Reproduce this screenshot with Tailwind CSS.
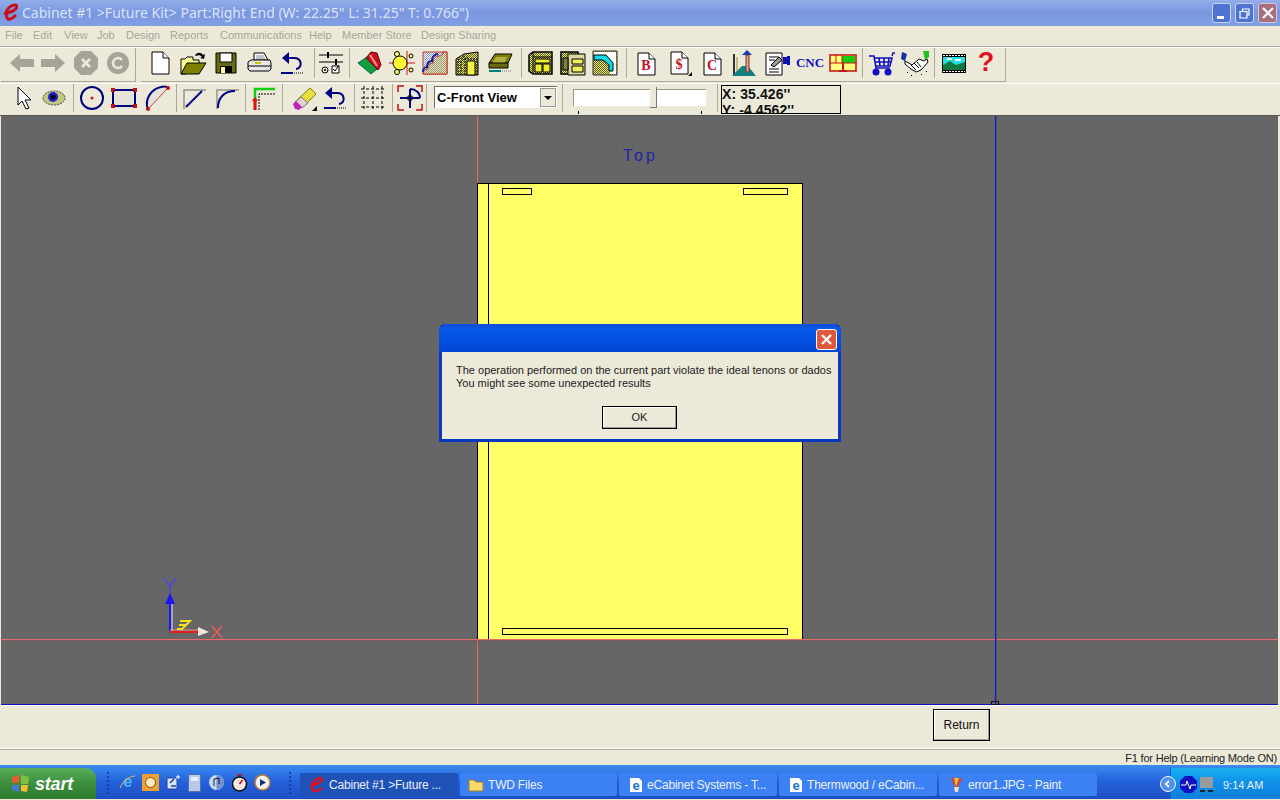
<!DOCTYPE html>
<html lang="en">
<head>
<meta charset="UTF-8">
<title>Cabinet #1 >Future Kit> Part:Right End</title>
<script src="https://cdn.jsdelivr.net/npm/@tailwindcss/browser@4"></script>
</head>
<body class="w-[1280px] h-[800px] overflow-hidden bg-[#ECE9D8] flex flex-col font-['Liberation_Sans','DejaVu_Sans',sans-serif]">

<!-- shared hatch fills for the toolbar icons -->
<svg class="absolute w-0 h-0">
  <defs>
    <pattern id="checkY" width="2" height="2" patternUnits="userSpaceOnUse"><path d="M0 0h2v2H0z" fill="#F0F040"/><path d="M0 0h1v1H0zM1 1h1v1H1z" fill="#555"/></pattern>
    <pattern id="checkG" width="2" height="2" patternUnits="userSpaceOnUse"><path d="M0 0h2v2H0z" fill="#E8E4B0"/><path d="M0 0h1v1H0zM1 1h1v1H1z" fill="#998"/></pattern>
    <pattern id="hatchB" width="2" height="2" patternUnits="userSpaceOnUse"><path d="M0 0h2v2H0z" fill="#fff"/><path d="M0 0h1v1H0zM1 1h1v1H1z" fill="#8890C0"/></pattern>
  </defs>
</svg>

<!-- title bar -->
<div class="h-[26px] shrink-0 flex items-center bg-gradient-to-b from-[#94AEEA] via-[#7A96DF] to-[#82A0E6]">
  <svg class="ml-[2px] w-[16px] h-[20px]" viewBox="0 0 16 20"><path d="M3 12C4 6 9 2 13 2c3 0 2 4-2 6L5 10M5 10c-1 4 0 7 3 6 2 0 4-2 6-4" fill="none" stroke="#C8101C" stroke-width="3"/></svg>
  <span class="ml-[4px] text-[14px] leading-none text-[#D9E4F9] whitespace-nowrap font-['Noto_Sans',sans-serif]">Cabinet #1 &gt;Future Kit&gt; Part:Right End (W: 22.25" L: 31.25" T: 0.766")</span>
  <div class="ml-auto mr-[3px] flex gap-[4px]">
    <div class="w-[19px] h-[20px] rounded-[3px] border border-[#C6D4F2] bg-[#4F73D3] flex items-end pl-[4px] pb-[3px]"><div class="w-[7px] h-[3px] bg-white"></div></div>
    <div class="w-[19px] h-[20px] rounded-[3px] border border-[#C6D4F2] bg-[#4F73D3] flex items-center justify-center">
      <svg class="w-[11px] h-[11px]" viewBox="0 0 11 11"><path d="M3.500 3V1h6.500v6H8M1 3.500h7v6.500H1z" fill="none" stroke="#fff" stroke-width="1.200"/></svg>
    </div>
    <div class="w-[19px] h-[20px] rounded-[3px] border border-[#D8C8D8] bg-[#A8707F] flex items-center justify-center">
      <svg class="w-[12px] h-[12px]" viewBox="0 0 12 12"><path d="M1 1l10 10M11 1L1 11" stroke="#fff" stroke-width="2.200"/></svg>
    </div>
  </div>
</div>

<!-- menu -->
<div class="h-[20px] shrink-0 flex items-center pb-[2px] text-[11px] text-[#A8A596] whitespace-nowrap">
  <span class="ml-[5px] w-[28px]">File</span><span class="w-[31px]">Edit</span><span class="w-[33px]">View</span><span class="w-[29px]">Job</span><span class="w-[44px]">Design</span><span class="w-[50px]">Reports</span><span class="w-[89px]">Communications</span><span class="w-[33px]">Help</span><span class="w-[79px]">Member Store</span><span>Design Sharing</span>
</div>
<div class="h-px shrink-0 bg-[#ACA899]"></div>
<div class="h-px shrink-0 bg-white"></div>

<!-- toolbar 1 -->
<div class="h-[35px] shrink-0 flex">
  <div class="ml-[1px] w-[135px] h-[34px] pb-[4px] border-r border-b border-[#ACA899] flex items-center">
    <svg class="ml-[7px] w-[28px] h-[28px]" viewBox="0 0 28 28"><path d="M2 14l10-9v5h14v8H12v5z" fill="#A6A398"/></svg>
    <svg class="ml-[3px] w-[28px] h-[28px]" viewBox="0 0 28 28"><path d="M26 14l-10-9v5H2v8h14v5z" fill="#A6A398"/></svg>
    <svg class="ml-[5px] w-[28px] h-[28px]" viewBox="0 0 28 28"><path d="M9 2h10l7 7v10l-7 7H9l-7-7V9z" fill="#A6A398"/><path d="M10 10l8 8M18 10l-8 8" stroke="#ECE9D8" stroke-width="2.500"/></svg>
    <svg class="ml-[4px] w-[28px] h-[28px]" viewBox="0 0 28 28"><circle cx="14" cy="14" r="11" fill="#A6A398"/><path d="M18 17a5 5 0 1 1 0-6" fill="none" stroke="#ECE9D8" stroke-width="2.500"/><path d="M17 12h8l-2 6z" fill="#A6A398"/></svg>
  </div>
  <div class="ml-[5px] w-[865px] h-[34px] pb-[4px] border-r border-b border-[#ACA899] flex items-center">
    <svg class="ml-[5px] w-[28px] h-[28px]" viewBox="0 0 28 28"><path d="M6 3h11l6 6v16H6z" fill="#fff" stroke="#000"/><path d="M17 3v6h6" fill="#fff" stroke="#000"/></svg>
    <svg class="ml-[5px] w-[28px] h-[28px]" viewBox="0 0 28 28"><path d="M2 10h4l2-2h6v3h6v5L6 25H2z" fill="#FFFF99" stroke="#000"/><path d="M2 25l6-11h19l-7 11z" fill="#808000" stroke="#000"/><path d="M16 6c3-3 6-3 8 0l2-1-1 5-4-1 2-1c-2-2-4-2-6-1" fill="#000"/></svg>
    <svg class="ml-[5px] w-[28px] h-[28px]" viewBox="0 0 28 28"><path d="M4 4h20v20H4z" fill="#6B6B10" stroke="#000"/><path d="M8 4h12v9H8z" fill="#fff" stroke="#000"/><path d="M8 17h12v7H8z" fill="#000"/><path d="M9 18h4v6H9z" fill="#FFFF99"/></svg>
    <svg class="ml-[5px] w-[28px] h-[28px]" viewBox="0 0 28 28"><path d="M9 4h10l4 7H9z" fill="#fff" stroke="#000"/><path d="M11 7h8M11 9h9" stroke="#888"/><path d="M3 13l3-2h19l1 3v6l-2 2H5l-2-2z" fill="#E8E8E8" stroke="#000"/><path d="M3 17h23" stroke="#000"/><path d="M10 14h6" stroke="#C8C800" stroke-width="2"/></svg>
    <svg class="ml-[5px] w-[28px] h-[28px]" viewBox="0 0 28 28"><path d="M6 9h10c8 0 9 10 2 11" fill="none" stroke="#000080" stroke-width="2"/><path d="M11 3L4 9l7 6z" fill="#000080"/><path d="M3 24h12" stroke="#000080" stroke-width="2"/><path d="M16 24h10" stroke="#000" stroke-dasharray="1 1"/></svg>
    <div class="ml-[8px] w-px h-[30px] bg-[#ACA899]"></div>
    <svg class="ml-[2px] w-[28px] h-[28px]" viewBox="0 0 28 28"><path d="M2 6h24M2 13h24" stroke="#000"/><path d="M11 3v6M19 10v6" stroke="#000" stroke-width="2"/><circle cx="8" cy="21" r="3" fill="none" stroke="#000"/><circle cx="8" cy="21" r="1"/><path d="M15 17h7v7h-7z" fill="#fff" stroke="#000"/><path d="M16 20l2 2 4-6" fill="none" stroke="#000"/></svg>
    <div class="ml-[4px] w-px h-[30px] bg-[#ACA899]"></div>
    <svg class="ml-[5px] w-[28px] h-[28px]" viewBox="0 0 28 28"><path d="M3 14l9-6 10 12-6 5z" fill="#0F9F3F" stroke="#064"/><path d="M11 9l5-6 6 1 4 12-3 5z" fill="#C8101C" stroke="#600"/><path d="M15 6l7 11" stroke="#FF9999" stroke-width="2"/></svg>
    <svg class="ml-[5px] w-[28px] h-[28px]" viewBox="0 0 28 28"><path d="M1 14h26M19 2v24" stroke="#E01010"/><circle cx="12" cy="14" r="7" fill="#FFFF33" stroke="#000"/><circle cx="9" cy="5" r="2.500" fill="#FFFF66" stroke="#000"/><circle cx="9" cy="23" r="2.500" fill="#FFFF66" stroke="#000"/><circle cx="23" cy="7" r="2" fill="#FFFF66" stroke="#000"/><circle cx="23" cy="21" r="2" fill="#FFFF66" stroke="#000"/></svg>
    <svg class="ml-[5px] w-[28px] h-[28px]" viewBox="0 0 28 28"><path d="M2 3h24v22H2z" fill="url(#hatchB)" stroke="#B04030"/><path d="M2 25c0-3 2-5 5-5 0-4 2-6 5-6 0-5 3-7 6-7 2 0 4-1 4-4h4v22z" fill="url(#checkG)" stroke="#C83018"/><path d="M2 23c0-3 2-5 4-5 0-4 2-6 5-6 0-5 3-7 6-7" fill="none" stroke="#1020A0" stroke-width="2"/></svg>
    <svg class="ml-[4px] w-[28px] h-[28px]" viewBox="0 0 28 28"><path d="M3 26V10l8-5 14-2v23z" fill="url(#checkY)" stroke="#000"/><path d="M5 26V11l7-4M8 26V12l7-4M12 26V10h12v16" fill="none" stroke="#000" stroke-dasharray="2 1"/><path d="M14 12h8v14h-8z" fill="#F2F040" stroke="#000"/></svg>
    <svg class="ml-[5px] w-[28px] h-[28px]" viewBox="0 0 28 28"><path d="M3 14l6-9h17l-4 9z" fill="#808000" stroke="#000"/><path d="M6 15l4-7h11l-3 7z" fill="#B0B040"/><path d="M3 14h19v5H3z" fill="#6A6A10" stroke="#000"/><path d="M3 22h12" stroke="#008080" stroke-width="2"/><path d="M16 22h9" stroke="#777" stroke-dasharray="1 1"/></svg>
    <div class="ml-[7px] w-px h-[30px] bg-[#ACA899]"></div>
    <svg class="ml-[4px] w-[28px] h-[28px]" viewBox="0 0 28 28"><path d="M3 6l4-3h19v22H7l-4-3z" fill="url(#checkY)" stroke="#000" stroke-width="1.500"/><path d="M7 3v22M7 8h19" stroke="#000"/><path d="M9 10h15v4H9z" fill="#EEEE30" stroke="#000"/><path d="M9 15h7v8H9zM17 15h7v8h-7z" fill="#EEEE30" stroke="#000"/></svg>
    <svg class="ml-[5px] w-[28px] h-[28px]" viewBox="0 0 28 28"><path d="M2 3h17v22H2z" fill="url(#checkY)" stroke="#000" stroke-width="1.500"/><path d="M9 5h17v21H9z" fill="#D8D8A0" stroke="#000"/><path d="M4 9h5v12H4z" fill="#808040" stroke="#000"/><path d="M13 10h11v5H13zM13 17h11v6H13z" fill="#EEEE60" stroke="#000"/></svg>
    <svg class="ml-[4px] w-[28px] h-[28px]" viewBox="0 0 28 28"><path d="M2 2h24v24H2z" fill="url(#checkY)" stroke="#333"/><path d="M3 3h22v5H3z" fill="#fff"/><path d="M3 8h9l7 6v11h6V3H3z" fill="#fff"/><path d="M3 6h12l7 8v8h-4v-6l-6-5H3z" fill="#10D8E8" stroke="#000"/></svg>
    <div class="ml-[7px] w-px h-[30px] bg-[#ACA899]"></div>
    <svg class="ml-[5px] w-[28px] h-[28px]" viewBox="0 0 28 28"><path d="M6 4h11l6 6v16H6z" fill="#fff" stroke="#000"/><path d="M17 4v6h6" fill="#fff" stroke="#000"/><text x="14" y="21" text-anchor="middle" font-family="Liberation Serif,serif" font-size="14" font-weight="700" fill="#C8101C">B</text></svg>
    <svg class="ml-[5px] w-[28px] h-[28px]" viewBox="0 0 28 28"><path d="M6 3h11l6 6v16H6z" fill="#fff" stroke="#000"/><path d="M17 3v6h6" fill="#fff" stroke="#000"/><text x="14" y="20" text-anchor="middle" font-family="Liberation Serif,serif" font-size="14" font-weight="700" fill="#C8101C">$</text><path d="M27 23v4h-4z"/></svg>
    <svg class="ml-[5px] w-[28px] h-[28px]" viewBox="0 0 28 28"><path d="M6 4h11l6 6v16H6z" fill="#fff" stroke="#000"/><path d="M17 4v6h6" fill="#fff" stroke="#000"/><text x="14" y="21" text-anchor="middle" font-family="Liberation Serif,serif" font-size="14" font-weight="700" fill="#C8101C">C</text></svg>
    <svg class="ml-[4px] w-[28px] h-[28px]" viewBox="0 0 28 28"><path d="M4 5v21h20" fill="none" stroke="#333" stroke-width="2"/><path d="M7 8v15h14" fill="none" stroke="#C8B880" stroke-width="2"/><path d="M2 27l10-10 6 0 8 10z" fill="#108080"/><path d="M12 6h10L17 1z" fill="#1040B0"/><path d="M16 6h3v17h-3z" fill="#E0A090" stroke="#803020"/></svg>
    <svg class="ml-[5px] w-[28px] h-[28px]" viewBox="0 0 28 28"><path d="M3 4h16v22H3z" fill="#fff" stroke="#000"/><path d="M6 8h10M6 11h6M6 20h10M6 23h10" stroke="#000"/><path d="M8 16l8-8 3 3-8 7z" fill="#999" stroke="#000"/><path d="M20 8h4v7h-4z" fill="#1010B0"/><path d="M24 7h3v9h-3z" fill="#1010B0"/></svg>
    <span class="ml-[5px] w-[28px] text-center text-[13px] leading-none font-bold text-[#1010C0] font-['Liberation_Serif',serif] whitespace-nowrap flex justify-center">CNC</span>
    <svg class="ml-[5px] w-[28px] h-[28px]" viewBox="0 0 28 28"><path d="M1 6h26v16H1z" fill="#FFFF80" stroke="#C81010" stroke-width="1.500"/><path d="M13 7h13v7H13z" fill="#10D010"/><path d="M1 14h26M7 6v8M13 6v8" stroke="#C81010"/><path d="M14 14v8M10 22h8" stroke="#C81010" stroke-width="2"/></svg>
    <div class="ml-[5px] w-px h-[30px] bg-[#ACA899]"></div>
    <svg class="ml-[4px] w-[28px] h-[28px]" viewBox="0 0 28 28"><path d="M2 7h5l2 12h14M7 9h18l-2 8H9M8 13h16M12 9l1 8M17 9v8M22 9l-1 8" fill="none" stroke="#1010C0" stroke-width="1.600"/><path d="M25 7l1-3h2" fill="none" stroke="#1010C0" stroke-width="1.500"/><circle cx="9" cy="23" r="3.500" fill="#1010C0"/><circle cx="21" cy="23" r="3.500" fill="#1010C0"/></svg>
    <svg class="ml-[6px] w-[28px] h-[28px]" viewBox="0 0 28 28"><path d="M1 3l5 2-2 7-4-2z" fill="#1030A0"/><path d="M22 2h6v6l-4 3z" fill="#20C020"/><path d="M4 12l7 4 7-6 5 2 3-2 1 3-7 8-5 2-5-3-6-5z" fill="#fff" stroke="#000"/><path d="M10 16l5 5M13 14l5 5M16 13l4 5" stroke="#000"/><path d="M6 23l1 1M10 26l1 1M20 25l1 1M25 22l1 1" stroke="#000"/></svg>
    <div class="ml-[5px] w-px h-[30px] bg-[#ACA899]"></div>
    <svg class="ml-[5px] w-[28px] h-[28px]" viewBox="0 0 28 28"><path d="M2 5h24v19H2z" fill="#000"/><path d="M3 8h22v13H3z" fill="#20E0E0"/><path d="M3 16l7-4 6 4 9-3v8H3z" fill="#107840"/><path d="M7 10h5M15 11h6" stroke="#fff" stroke-width="2"/><path d="M3 6.500h22M3 22.500h22" stroke="#fff" stroke-dasharray="2 1"/></svg>
    <span class="ml-[4px] w-[28px] text-center text-[27px] leading-none font-bold text-[#E01020]">?</span>
  </div>
</div>

<!-- toolbar 2 -->
<div class="h-[32px] shrink-0 flex items-center pb-[3px] border-t border-white">
  <svg class="ml-[9px] w-[28px] h-[28px]" viewBox="0 0 28 28"><path d="M9 3v18l4-4 4 8 3-1-4-8h6z" fill="#fff" stroke="#000"/></svg>
  <svg class="ml-[3px] w-[28px] h-[28px]" viewBox="0 0 28 28"><ellipse cx="14" cy="14" rx="11" ry="7" fill="#C0C880" stroke="#444" stroke-dasharray="2 1"/><circle cx="13" cy="13" r="5" fill="#2020D0"/><circle cx="13" cy="13" r="2.500" fill="#000"/></svg>
  <div class="ml-[5px] w-px h-[28px] bg-[#ACA899]"></div>
  <svg class="ml-[4px] w-[28px] h-[28px]" viewBox="0 0 28 28"><circle cx="14" cy="14" r="11" fill="none" stroke="#000080" stroke-width="2"/><circle cx="14" cy="14" r="1.500" fill="#E01010"/></svg>
  <svg class="ml-[4px] w-[28px] h-[28px]" viewBox="0 0 28 28"><path d="M3 6h22v16H3z" fill="#E4E4D8" stroke="#000080" stroke-width="2"/><path d="M1 4h4v4H1zM23 4h4v4h-4zM1 20h4v4H1zM23 20h4v4h-4z" fill="#C01010"/></svg>
  <svg class="ml-[5px] w-[28px] h-[28px]" viewBox="0 0 28 28"><path d="M5 25C1 16 8 5 18 3c4-1 6 0 7 1z" fill="#E4E4D8"/><path d="M5 25C1 16 8 5 18 3c4-1 6 0 7 1" fill="none" stroke="#000080" stroke-width="2"/><path d="M5 25L25 4" stroke="#C04040"/><circle cx="5" cy="25" r="2" fill="#C01010"/><circle cx="25" cy="4" r="2" fill="#C01010"/></svg>
  <div class="ml-[5px] w-px h-[28px] bg-[#ACA899]"></div>
  <svg class="ml-[4px] w-[28px] h-[28px]" viewBox="0 0 28 28"><path d="M3 25V6h22" fill="none" stroke="#A8A8A0" stroke-width="2"/><path d="M5 23L21 7" stroke="#000080" stroke-width="2"/></svg>
  <svg class="ml-[5px] w-[28px] h-[28px]" viewBox="0 0 28 28"><path d="M3 25V6h22" fill="none" stroke="#A8A8A0" stroke-width="2"/><path d="M4 24c0-10 6-17 17-17" fill="none" stroke="#000080" stroke-width="2"/></svg>
  <div class="ml-[3px] w-px h-[28px] bg-[#ACA899]"></div>
  <svg class="ml-[4px] w-[28px] h-[28px]" viewBox="0 0 28 28"><path d="M5 26V5h20" fill="none" stroke="#10D010" stroke-width="2.500"/><path d="M9 26V10h16" fill="none" stroke="#000" stroke-dasharray="2 1"/><path d="M5 26v-11" stroke="#E01010" stroke-width="3"/><path d="M2 17l3-4 3 4z" fill="#E01010"/></svg>
  <div class="ml-[4px] w-px h-[28px] bg-[#ACA899]"></div>
  <svg class="ml-[7px] w-[28px] h-[28px]" viewBox="0 0 28 28"><path d="M5 18L20 4l6 6-14 14z" fill="#E8E040" stroke="#808000"/><path d="M5 18l6-5 7 6-6 5z" fill="#E0D0D0" stroke="#777"/><path d="M3 20l3-3 6 6-3 3-4-1z" fill="#C020C0"/><path d="M27 22v5h-5z"/></svg>
  <svg class="ml-[3px] w-[28px] h-[28px]" viewBox="0 0 28 28"><path d="M6 9h10c8 0 9 10 2 11" fill="none" stroke="#000080" stroke-width="2"/><path d="M11 3L4 9l7 6z" fill="#000080"/><path d="M3 24h12" stroke="#000080" stroke-width="2"/><path d="M16 24h10" stroke="#000" stroke-dasharray="1 1"/></svg>
  <div class="ml-[5px] w-px h-[28px] bg-[#ACA899]"></div>
  <svg class="ml-[4px] w-[28px] h-[28px]" viewBox="0 0 28 28"><path d="M2 5h24M2 14h24M2 23h24M5 2v24M14 2v24M23 2v24" stroke="#000" stroke-dasharray="3 2"/></svg>
  <div class="ml-[5px] w-px h-[28px] bg-[#ACA899]"></div>
  <svg class="ml-[3px] w-[28px] h-[28px]" viewBox="0 0 28 28"><path d="M2 8V2h6M20 2h6v6M2 20v6h6M26 20v6h-6" fill="none" stroke="#C01010" stroke-width="1.500"/><path d="M4 14h20M14 5v19M14 5c6 0 10 4 10 9" fill="none" stroke="#000080" stroke-width="2"/><path d="M12 12h4v4h-4z" fill="none" stroke="#000"/></svg>
  <div class="ml-[2px] w-px h-[28px] bg-[#ACA899]"></div>
  <!-- view dropdown -->
  <div class="ml-[7px] mt-[-2px] w-[123px] h-[22px] bg-white border-t border-l border-[#716F64] flex items-center justify-between">
    <span class="ml-[2px] text-[13px] font-bold leading-none text-black whitespace-nowrap">C-Front View</span>
    <div class="mr-[1px] w-[16px] h-[19px] bg-[#ECE9D8] border border-[#999] flex items-center justify-center"><div class="border-x-[4px] border-t-[4px] border-x-transparent border-t-black"></div></div>
  </div>
  <div class="ml-[5px] w-px h-[28px] bg-[#ACA899]"></div>
  <!-- slider -->
  <div class="relative ml-[10px] mt-[-2px] w-[133px] h-[27px]">
    <div class="mt-[5px] h-[17px] bg-white border-t border-l border-[#9A9788]"></div>
    <div class="absolute left-[77px] top-[3px] w-[7px] h-[21px] bg-[#ECE9D8] border-r border-b border-[#777]"></div>
    <div class="absolute left-[5px] bottom-[-3px] w-px h-[3px] bg-black"></div>
    <div class="absolute left-[128px] bottom-[-3px] w-px h-[3px] bg-black"></div>
  </div>
  <div class="ml-[11px] w-px h-[28px] bg-[#ACA899]"></div>
  <!-- coordinates -->
  <div class="ml-[3px] mt-[2px] w-[120px] h-[29px] border border-black overflow-hidden text-[14px] leading-[16px] font-bold tracking-[0.1px] text-[#111] whitespace-nowrap">
    <div>X: 35.426''</div><div>Y: -4.4562''</div>
  </div>
</div>
<div class="h-px shrink-0 bg-[#555]"></div>

<!-- drawing area -->
<div class="relative h-[589px] ml-px mr-[2px] shrink-0 bg-[#666666] overflow-hidden">
  <div class="absolute left-[476px] top-0 bottom-0 w-px bg-[#E86A6A] shadow-[-1px_0_0_#7C5C5C]"></div>
  <div class="absolute left-0 right-0 top-[523px] h-px bg-[#E86A6A] shadow-[0_1px_0_#7C5C5C]"></div>
  <div class="absolute left-[994px] top-0 bottom-0 w-px bg-[#1414D8] shadow-[1px_0_0_#50507E]"></div>
  <div class="absolute left-0 right-0 bottom-0 h-px bg-[#1010C0]"></div>
  <div class="absolute left-[990px] bottom-0 w-[8px] h-[4px] border border-[#111]"></div>

  <span class="absolute left-[622px] top-[29px] text-[16px] leading-[22px] tracking-[3px] text-[#2222A8]">Top</span>

  <div class="absolute left-[476px] top-[67px] w-[326px] h-[456px] bg-[#FFFF66] border-t border-r border-l border-black">
    <div class="absolute left-[10px] top-0 bottom-0 w-px bg-black"></div>
    <div class="absolute left-[24px] top-[4px] w-[30px] h-[7px] border border-black"></div>
    <div class="absolute left-[265px] top-[4px] w-[45px] h-[7px] border border-black"></div>
    <div class="absolute left-[24px] top-[444px] w-[286px] h-[7px] border border-black"></div>
  </div>

  <!-- axis marker -->
  <svg class="absolute left-[155px] top-[460px] w-[80px] h-[65px]" viewBox="0 0 80 65">
    <path d="M14 18V55" stroke="#1818F0" stroke-width="2"/><path d="M16 26V55" stroke="#E0E0FF"/>
    <path d="M9 28l5-11 5 11z" fill="#1818F0"/>
    <path d="M14 56H42" stroke="#E02020" stroke-width="2"/><path d="M14 54h30" stroke="#F09090"/>
    <path d="M42 51l11 5-11 4z" fill="#F8E8E0"/>
    <path d="M8 2l6 8 6-8M14 10v7" fill="none" stroke="#4848E8" stroke-width="1.500"/>
    <path d="M56 50l10 12M66 50L56 62" stroke="#EE5A5A" stroke-width="1.500"/>
    <path d="M24 45h10l-8 8h-5M23 49h7" fill="none" stroke="#F0E020" stroke-width="2"/>
  </svg>
</div>

<!-- bottom panel -->
<div class="h-px shrink-0 bg-white"></div>
<div class="h-[43px] shrink-0 flex items-center border-b border-white">
  <div class="ml-[933px] mt-[-5px] w-[57px] h-[32px] border border-black bg-[#ECE9D8] shadow-[inset_-1px_-1px_0_#999,inset_1px_1px_0_#fff] flex items-center justify-center text-[12px] leading-none text-[#111]">Return</div>
</div>

<!-- status bar -->
<div class="h-[16px] shrink-0 border-t border-[#ACA899] flex items-center justify-end pt-[1px] pr-[3px] text-[11px] tracking-[-0.2px] leading-none text-[#222] whitespace-nowrap">F1 for Help (Learning Mode ON)</div>

<!-- taskbar -->
<div class="relative h-[34px] shrink-0 bg-gradient-to-b from-[#3C8CF0] via-[#2460DC] to-[#1D4FC0] flex items-end text-[12px] tracking-[-0.2px] leading-none text-[#EAF0FF] whitespace-nowrap">
  <div class="w-[96px] h-[31px] rounded-tr-[10px] bg-gradient-to-b from-[#5AAE5A] via-[#3C8E3C] to-[#2F7A2F] flex items-center">
    <svg class="ml-[11px] w-[19px] h-[19px]" viewBox="0 0 19 19"><path d="M1 3l7-2v8H1z" fill="#E85A30"/><path d="M10 1l8 2-1 7h-7z" fill="#7EC040"/><path d="M1 11h7v7l-7-2z" fill="#4878D8"/><path d="M10 11h7l-1 7-6-1z" fill="#F0C030"/></svg>
    <span class="ml-[5px] text-[18px] leading-none font-bold italic text-white">start</span>
  </div>
  <div class="h-[27px] mb-[3px] flex items-center">
    <div class="ml-[11px] h-[22px] border-l-2 border-dotted border-[#143FA0]"></div>
    <svg class="ml-[10px] w-[17px] h-[17px]" viewBox="0 0 17 17"><text x="8.500" y="13" text-anchor="middle" font-family="Liberation Sans,sans-serif" font-size="16" font-weight="700" fill="#4FB8F0">e</text><path d="M1 14C5 5 12 2 16 2" fill="none" stroke="#E8C040"/></svg>
    <div class="ml-[6px] w-[17px] h-[17px] bg-[#F0A030] flex items-center justify-center"><div class="w-[11px] h-[11px] rounded-full bg-[#FBE8C0] border border-[#805010]"></div></div>
    <svg class="ml-[6px] w-[16px] h-[17px]" viewBox="0 0 16 17"><path d="M2 4h10v11H2z" fill="#D8E8FF" stroke="#2040A0"/><path d="M5 9l4-4M6 12h5" stroke="#1840A0" stroke-width="1.500"/><path d="M13 1v4M11 3h4" stroke="#fff"/></svg>
    <div class="ml-[7px] w-[13px] h-[18px] bg-[#B8C8E8] border border-[#5070B0]"><div class="m-[2px] h-[4px] bg-[#E8F0FF]"></div></div>
    <svg class="ml-[7px] w-[17px] h-[17px]" viewBox="0 0 17 17"><circle cx="8.500" cy="8.500" r="7.500" fill="#C8D8F0"/><path d="M8.500 1a7.500 7.500 0 0 1 0 15z" fill="#7090D0"/><path d="M6 12V5l5-1v6" fill="none" stroke="#123" /></svg>
    <svg class="ml-[6px] w-[17px] h-[18px]" viewBox="0 0 17 18"><circle cx="8.500" cy="10" r="7" fill="#FBE8E0" stroke="#111" stroke-width="1.500"/><path d="M8.500 10l3-4M6 1h5" stroke="#B01010" stroke-width="1.500"/></svg>
    <svg class="ml-[6px] w-[17px] h-[17px]" viewBox="0 0 17 17"><circle cx="8.500" cy="8.500" r="7.500" fill="#F4F4F4" stroke="#C08030" stroke-width="1.500"/><path d="M6 5l6 3.500L6 12z" fill="#12307A"/></svg>
    <div class="ml-[18px] h-[22px] border-l-2 border-dotted border-[#143FA0]"></div>
  </div>
  <div class="ml-[9px] mb-[3px] flex gap-[2px]">
    <div class="w-[158px] h-[23px] rounded-[2px] bg-[#1E52B7] flex items-center">
      <svg class="ml-[9px] w-[14px] h-[16px]" viewBox="0 0 14 16"><path d="M2 10C3 5 8 1 11 1c3 0 2 3-1 5L4 8M4 8c-1 4 0 7 3 6 2 0 4-2 6-3" fill="none" stroke="#E01020" stroke-width="2.500"/></svg>
      <span class="ml-[6px]">Cabinet #1 &gt;Future ...</span>
    </div>
    <div class="w-[157px] h-[23px] rounded-[2px] bg-[#3C81F3] flex items-center">
      <svg class="ml-[8px] w-[16px] h-[14px]" viewBox="0 0 16 14"><path d="M1 2h5l2 2h7v9H1z" fill="#F8D868" stroke="#A08020"/></svg>
      <span class="ml-[4px]">TWD Files</span>
    </div>
    <div class="w-[158px] h-[23px] rounded-[2px] bg-[#3C81F3] flex items-center">
      <svg class="ml-[9px] w-[16px] h-[16px]" viewBox="0 0 16 16"><path d="M2 1h9l3 3v11H2z" fill="#fff"/><text x="8" y="13" text-anchor="middle" font-family="Liberation Sans,sans-serif" font-size="13" font-weight="700" fill="#2070D0">e</text></svg>
      <span class="ml-[3px]">eCabinet Systems - T...</span>
    </div>
    <div class="w-[158px] h-[23px] rounded-[2px] bg-[#3C81F3] flex items-center">
      <svg class="ml-[9px] w-[16px] h-[16px]" viewBox="0 0 16 16"><path d="M2 1h9l3 3v11H2z" fill="#fff"/><text x="8" y="13" text-anchor="middle" font-family="Liberation Sans,sans-serif" font-size="13" font-weight="700" fill="#2070D0">e</text></svg>
      <span class="ml-[3px]">Thermwood / eCabin...</span>
    </div>
    <div class="w-[158px] h-[23px] rounded-[2px] bg-[#3C81F3] flex items-center">
      <svg class="ml-[10px] w-[15px] h-[17px]" viewBox="0 0 15 17"><path d="M2 2l4 9h3l4-9z" fill="#D84030"/><path d="M5 2l2 9 3-9z" fill="#F0C030"/><path d="M5 11h5l-1 5H6z" fill="#E8E0C0"/></svg>
      <span class="ml-[4px]">error1.JPG - Paint</span>
    </div>
  </div>
  <!-- tray -->
  <div class="absolute right-0 top-[3px] bottom-0 w-[110px] pt-[1px] bg-gradient-to-b from-[#18B0F0] via-[#0F8EE8] to-[#0F80D8] border-l border-[#1060C8] flex items-center">
    <div class="absolute left-[-11px] top-[8px] w-[16px] h-[16px] rounded-full bg-[#5090F0] border border-white text-white flex items-center justify-center">
      <svg class="w-[8px] h-[8px]" viewBox="0 0 8 8"><path d="M5 1L2 4l3 3" fill="none" stroke="#fff" stroke-width="2"/></svg>
    </div>
    <svg class="ml-[9px] w-[17px] h-[17px]" viewBox="0 0 17 17"><path d="M5 0h7l5 5v7l-5 5H5l-5-5V5z" fill="#1010C0"/><path d="M1 9h5l1-4 3 8 1-4h5" fill="none" stroke="#fff"/></svg>
    <svg class="ml-[2px] w-[15px] h-[17px]" viewBox="0 0 15 17"><path d="M1 1h13v11H1z" fill="#9A9A9A"/><path d="M1 15h5M9 15h5" stroke="#222" stroke-width="2"/></svg>
    <span class="ml-[9px] mt-[2px] text-[11px] tracking-normal text-[#EAF4FF]">9:14 AM</span>
  </div>
</div>

<!-- warning dialog -->
<div class="absolute left-[439px] top-[324px] w-[402px] h-[118px] rounded-t-[6px] bg-[#1050D8] border-x-[3px] border-b-[3px] border-[#0838C0] flex flex-col">
  <div class="h-[25px] shrink-0 mt-[3px] mx-[-3px] bg-gradient-to-b from-[#0A5AE8] via-[#0450E0] to-[#0246D4] flex justify-end items-start pr-[4px]">
    <div class="mt-[2px] w-[21px] h-[21px] rounded-[3px] border border-white bg-[#E0583A] flex items-center justify-center">
      <svg class="w-[13px] h-[13px]" viewBox="0 0 13 13"><path d="M2 2l9 9M11 2l-9 9" stroke="#fff" stroke-width="2.400"/></svg>
    </div>
  </div>
  <div class="grow bg-[#ECE9D8] flex flex-col">
    <p class="ml-[14px] mt-[12px] text-[11px] leading-[13px] text-[#222] whitespace-nowrap">The operation performed on the current part violate the ideal tenons or dados<br>You might see some unexpected results</p>
    <div class="ml-[160px] mt-[16px] w-[75px] h-[23px] border border-black bg-[#ECE9D8] shadow-[inset_-1px_-1px_0_#999,inset_1px_1px_0_#fff] flex items-center justify-center text-[11px] leading-none text-[#222]">OK</div>
  </div>
</div>

</body>
</html>
